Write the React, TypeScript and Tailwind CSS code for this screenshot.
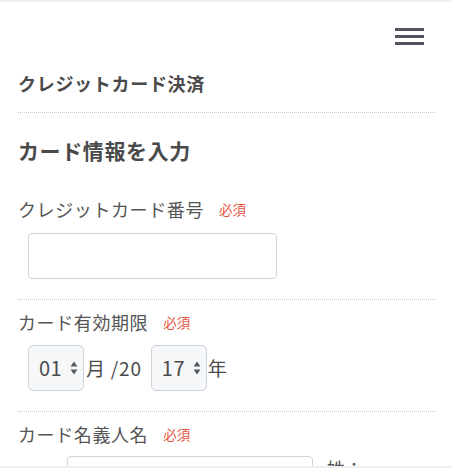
import React from "react";

const jp = { fontFamily: '"Noto Sans CJK JP", "Noto Sans", sans-serif' };

function Required() {
  return <span className="ml-[15px] text-[13.5px] leading-[18px] text-[#e5553f]">必須</span>;
}

function Label({ text }: { text: string }) {
  return (
    <div className="flex items-center h-[24px]">
      <span className="text-[18px] leading-[24px] tracking-[0.6px] text-[#555555]">{text}</span>
      <Required />
    </div>
  );
}

function Arrows() {
  return (
    <svg width="8" height="14" viewBox="0 0 8 14" className="ml-[8px]">
      <path d="M4 0.5 L7.5 5.5 H0.5 Z" fill="#555a63" />
      <path d="M4 13.5 L7.5 8.5 H0.5 Z" fill="#555a63" />
    </svg>
  );
}

function NumSelect({ value }: { value: string }) {
  return (
    <div className="flex items-center w-[56px] h-[46px] pl-[10px] bg-[#f6f7f9] border border-[#cdd3db] rounded-[5px]">
      <span className="text-[20px] tracking-[0.5px] text-[#4a4a4a]">{value}</span>
      <Arrows />
    </div>
  );
}

function Divider() {
  return <div className="border-t border-dotted border-[#c9c9c9]" />;
}

export default function App() {
  return (
    <div className="w-[452px] h-[468px] flex flex-col overflow-hidden bg-white" style={jp}>
      <div className="h-[2px] bg-[#efefef]" />
      <div className="flex-1 overflow-hidden">
        {/* header */}
        <div className="flex justify-end pt-[26px] pr-[28px]">
          <div className="flex flex-col gap-[4px] w-[29px]">
            <div className="h-[3px] bg-[#50555f]" />
            <div className="h-[3px] bg-[#50555f]" />
            <div className="h-[3px] bg-[#50555f]" />
          </div>
        </div>

        <div className="mx-[18px] w-[417px]">
          <h1 className="mt-[26px] text-[18px] leading-[24px] tracking-[0.7px] font-bold text-[#4a4a4a]">
            クレジットカード決済
          </h1>
          <div className="mt-[17px]">
            <Divider />
          </div>

          <h2 className="mt-[22px] text-[21px] leading-[30px] tracking-[0.6px] font-bold text-[#4a4a4a]">
            カード情報を入力
          </h2>

          {/* card number */}
          <div className="mt-[32px]">
            <Label text="クレジットカード番号" />
            <div className="ml-[10px] mt-[12px] w-[249px] h-[46px] border border-[#cdd3db] rounded-[4px] bg-white" />
          </div>
          <div className="mt-[20px]">
            <Divider />
          </div>

          {/* expiry */}
          <div className="mt-[10px]">
            <Label text="カード有効期限" />
            <div className="flex items-center ml-[10px] mt-[11px] text-[19px] text-[#4a4a4a]">
              <NumSelect value="01" />
              <span className="ml-[2px] tracking-[0.8px]">月 /20</span>
              <div className="ml-[9px]">
                <NumSelect value="17" />
              </div>
              <span className="ml-[1px]">年</span>
            </div>
          </div>
          <div className="mt-[20px]">
            <Divider />
          </div>

          {/* holder */}
          <div className="mt-[10px]">
            <Label text="カード名義人名" />
            <div className="flex items-start ml-[49px] mt-[10px]">
              <div className="w-[246px] h-[46px] border border-[#cdd3db] rounded-[4px] bg-white" />
              <span className="ml-[14px] text-[18px] leading-[24px] text-[#555555]">姓：</span>
            </div>
          </div>
        </div>
      </div>
      <div className="h-[2px] bg-[#efefef]" />
    </div>
  );
}
